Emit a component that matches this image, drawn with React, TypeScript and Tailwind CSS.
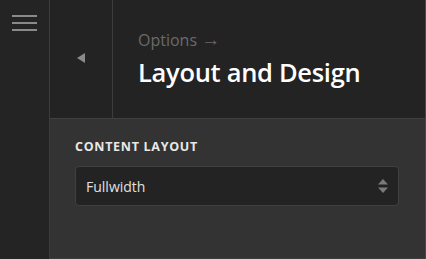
import React from 'react';

const App: React.FC = () => {
  return (
    <div className="flex h-[259px] w-[426px] overflow-hidden bg-[#242424] font-['Open_Sans',sans-serif]">
      {/* Left rail */}
      <div className="w-[50px] shrink-0 border-r border-[#3c3c3c] bg-[#242424] pt-[15px] pl-[12px]">
        <div className="flex w-[25px] flex-col gap-[5px]">
          <span className="h-[2px] bg-[#8a8a8a]" />
          <span className="h-[2px] bg-[#8a8a8a]" />
          <span className="h-[2px] bg-[#8a8a8a]" />
        </div>
      </div>

      {/* Main panel */}
      <div className="flex flex-1 flex-col border-r border-[#3a4a66]">
        <div className="flex h-[119px] shrink-0 border-b border-[#404040] bg-[#232323]">
          <div className="flex w-[63px] items-center justify-center border-r border-[#3c3c3c] pb-[2px]">
            <span className="h-0 w-0 border-y-[5px] border-r-[8px] border-y-transparent border-r-[#8a8a8a]" />
          </div>
          <div className="flex flex-col pl-[25px] pt-[29px]">
            <span className="text-[16px] leading-[22px] text-[#6a6a6a]">
              Options <span className="text-[19px] leading-[19px]">→</span>
            </span>
            <span className="mt-[4px] text-[25.5px] font-semibold leading-[34px] tracking-[-0.3px] text-white">
              Layout and Design
            </span>
          </div>
        </div>

        <div className="flex-1 border-b border-[#3e3e3e] bg-[#333333] px-[25px] pt-[19px]">
          <div className="text-[12.5px] font-bold uppercase leading-[17px] tracking-[0.7px] text-[#e8e8e8]">
            Content Layout
          </div>
          <div className="mt-[11px] flex h-[40px] w-[324px] items-center justify-between rounded-[4px] border border-[#404040] bg-[#232323] pl-[10px] pr-[10px]">
            <span className="text-[14px] text-[#e0e0e0]">Fullwidth</span>
            <svg width="10" height="16" viewBox="0 0 10 16" className="text-[#7a7a7a]">
              <path d="M5 1 L10 6.5 L0 6.5 Z" fill="currentColor" />
              <path d="M5 15 L10 9.5 L0 9.5 Z" fill="currentColor" />
            </svg>
          </div>
        </div>
      </div>
    </div>
  );
};

export default App;
